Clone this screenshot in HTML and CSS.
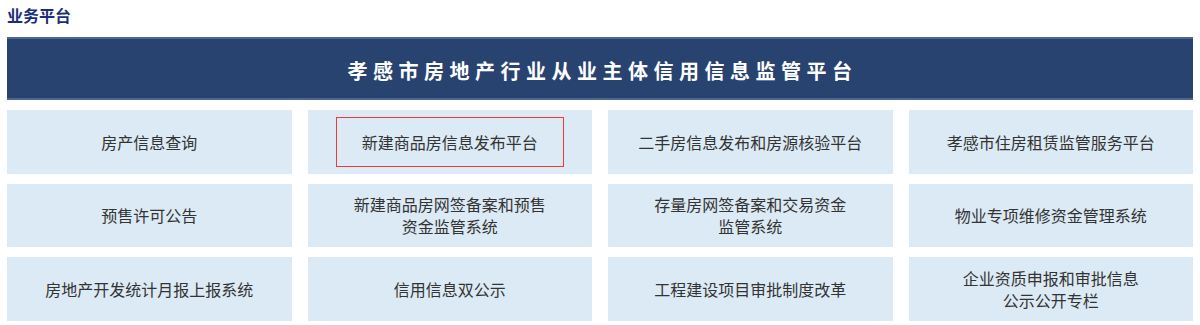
FILE: index.html
```html
<!DOCTYPE html>
<html lang="zh-CN">
<head>
<meta charset="utf-8">
<title>业务平台</title>
<link rel="stylesheet" href="styles.css">
</head>
<body>
<div class="page">
  <div class="section-title">业务平台</div>
  <div class="banner">孝感市房地产行业从业主体信用信息监管平台</div>
  <div class="grid">
    <a class="cell"><span>房产信息查询</span></a>
    <a class="cell"><span class="boxed">新建商品房信息发布平台</span></a>
    <a class="cell"><span>二手房信息发布和房源核验平台</span></a>
    <a class="cell"><span>孝感市住房租赁监管服务平台</span></a>
    <a class="cell"><span>预售许可公告</span></a>
    <a class="cell"><span>新建商品房网签备案和预售<br>资金监管系统</span></a>
    <a class="cell"><span>存量房网签备案和交易资金<br>监管系统</span></a>
    <a class="cell"><span>物业专项维修资金管理系统</span></a>
    <a class="cell"><span>房地产开发统计月报上报系统</span></a>
    <a class="cell"><span>信用信息双公示</span></a>
    <a class="cell"><span>工程建设项目审批制度改革</span></a>
    <a class="cell"><span>企业资质申报和审批信息<br>公示公开专栏</span></a>
  </div>
</div>
</body>
</html>
```

FILE: styles.css
```css
html, body {
  margin: 0;
  padding: 0;
  background: #ffffff;
}
body {
  font-family: "Noto Sans CJK SC", "Noto Sans", "Liberation Sans", sans-serif;
}
.page {
  width: 1186px;
  padding: 0 7px;
}
.section-title {
  height: 36px;
  box-sizing: border-box;
  padding-top: 5px;
  font-size: 16px;
  line-height: 20px;
  font-weight: bold;
  color: #1b2f78;
}
.banner {
  height: 63px;
  box-sizing: border-box;
  margin-top: 1px;
  background: #284370;
  border-top: 2px solid #4f6690;
  border-bottom: 2px solid #4f6690;
  color: #ffffff;
  font-size: 20px;
  font-weight: bold;
  letter-spacing: 5.5px;
  text-align: center;
  line-height: 59px;
  padding-top: 2px;
  padding-left: 5px;
}
.grid {
  margin-top: 10px;
  display: grid;
  grid-template-columns: repeat(4, 1fr);
  grid-auto-rows: 63.5px;
  column-gap: 16px;
  row-gap: 10px;
}
.cell {
  background: #dceaf5;
  display: flex;
  align-items: center;
  justify-content: center;
  text-align: center;
  color: #333333;
  font-size: 16px;
  line-height: 22px;
  text-decoration: none;
}
.boxed {
  display: inline-block;
  border: 1px solid #f03a3a;
  padding: 13px 25px 13px;
}
```
